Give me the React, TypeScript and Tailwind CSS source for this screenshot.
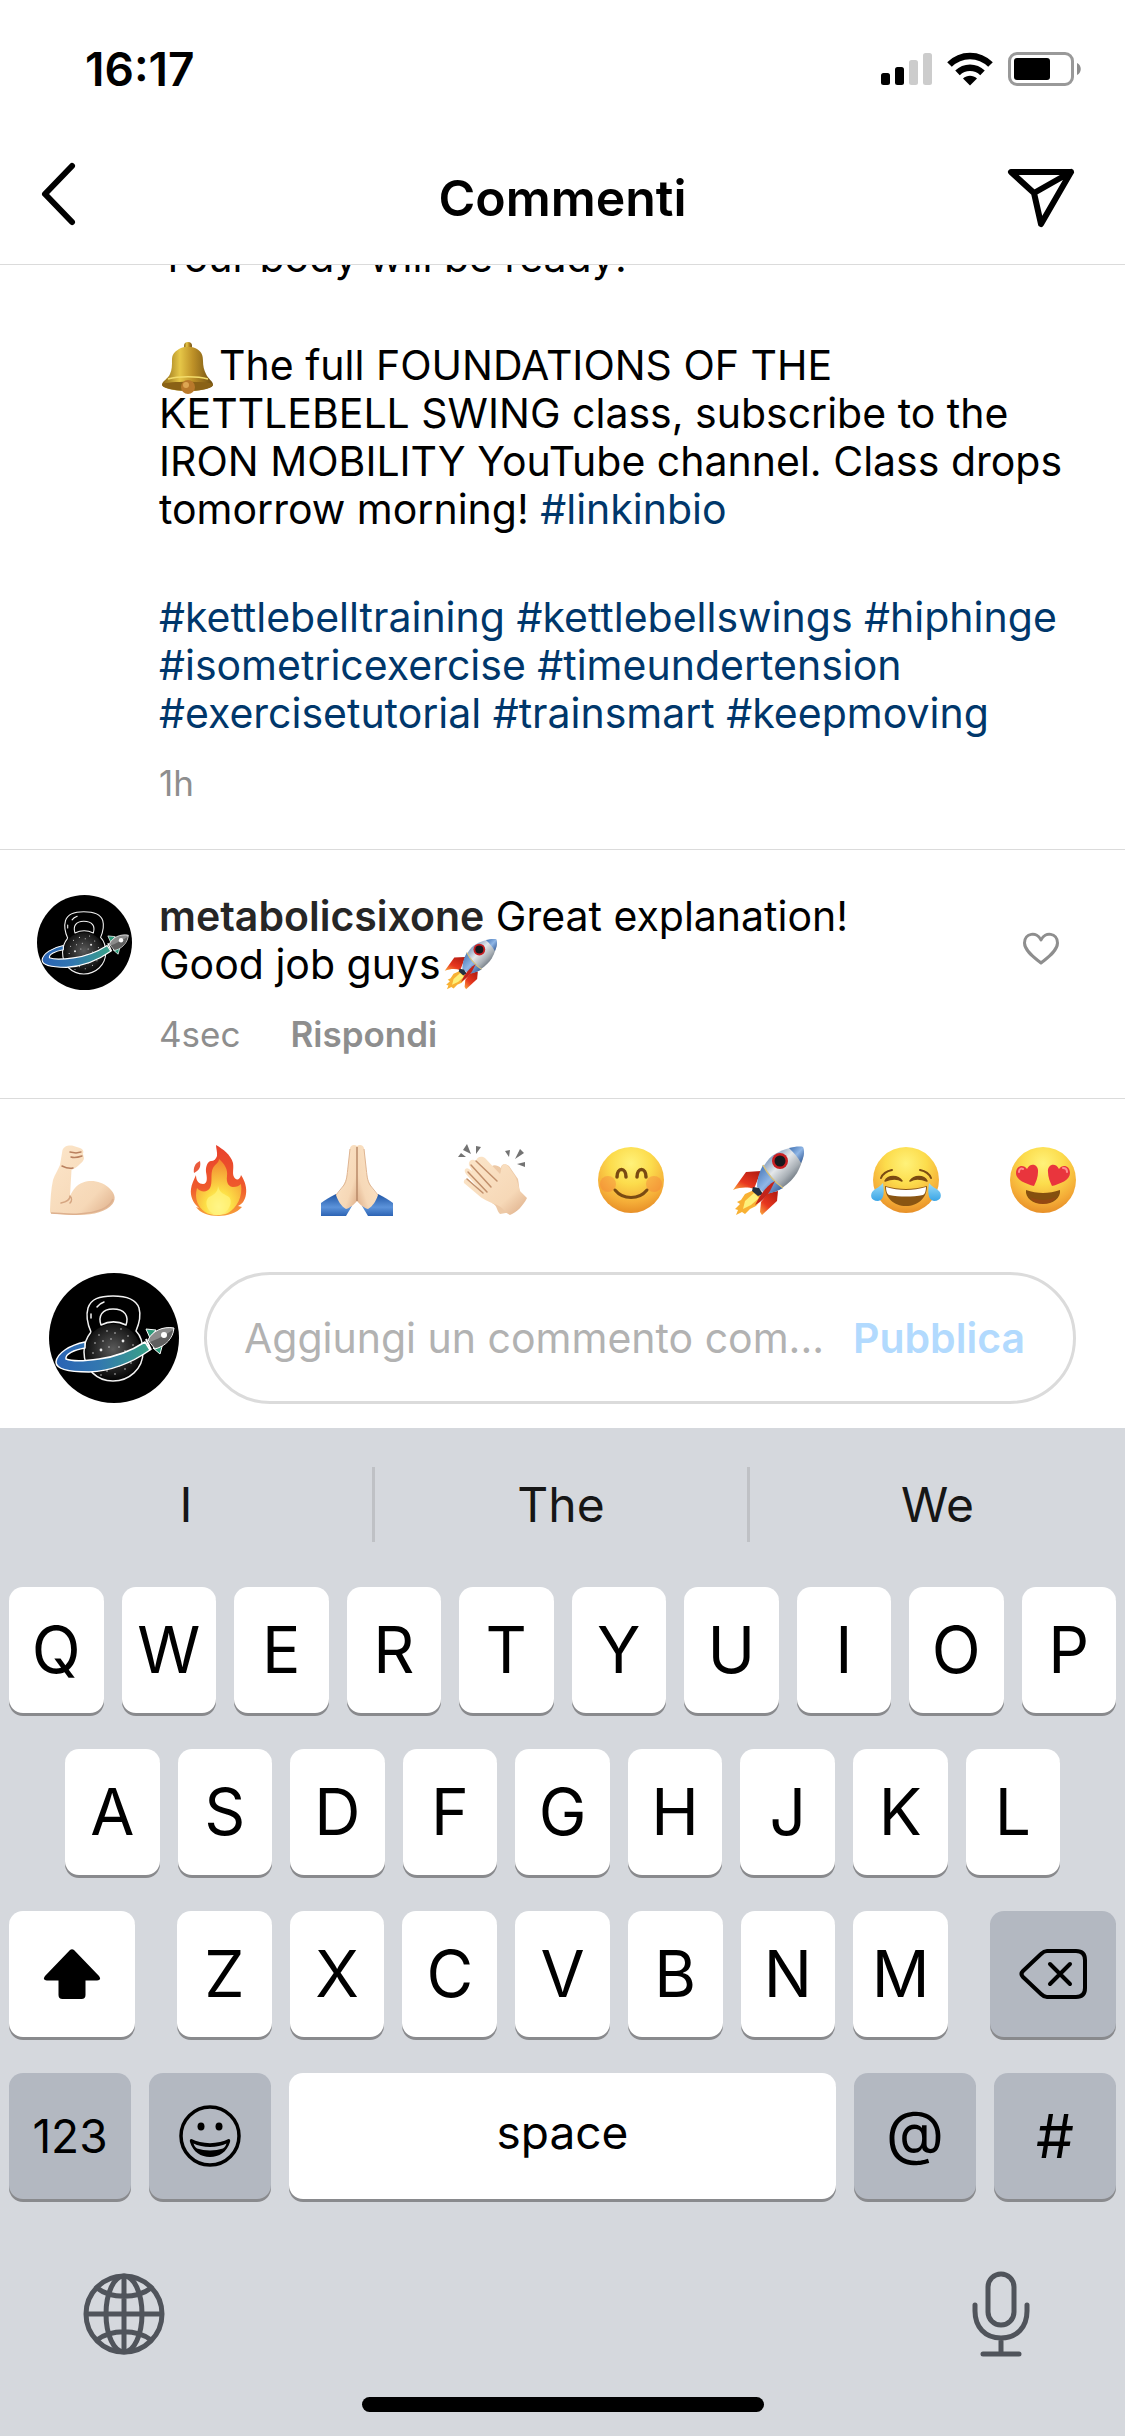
import type { ReactNode } from "react";

/* Shared gradient definitions used by the emoji and the avatar. */
function Gradients() {
  return (
    <svg width="0" height="0" className="absolute" aria-hidden="true">
      <defs>
        <radialGradient id="face" cx="0.5" cy="0.25" r="0.78">
          <stop offset="0" stopColor="#fff27a" />
          <stop offset="0.4" stopColor="#fcdc4c" />
          <stop offset="0.75" stopColor="#f5ae38" />
          <stop offset="1" stopColor="#e58a25" />
        </radialGradient>
        <linearGradient id="skin" x1="0" y1="0" x2="1" y2="1">
          <stop offset="0" stopColor="#fce6ca" />
          <stop offset="0.7" stopColor="#f6d8b7" />
          <stop offset="1" stopColor="#dcab86" />
        </linearGradient>
        <linearGradient id="flame" x1="0" y1="0" x2="0" y2="1">
          <stop offset="0" stopColor="#e8402c" />
          <stop offset="0.6" stopColor="#ef5a2c" />
          <stop offset="1" stopColor="#f7a03a" />
        </linearGradient>
        <radialGradient id="core" cx="0.5" cy="0.85" r="0.8">
          <stop offset="0" stopColor="#fffbb0" />
          <stop offset="0.35" stopColor="#fde047" />
          <stop offset="1" stopColor="#f38b30" />
        </radialGradient>
        <linearGradient id="sleeve" x1="0" y1="0" x2="0" y2="1">
          <stop offset="0" stopColor="#1f55a5" />
          <stop offset="0.6" stopColor="#5c93da" />
          <stop offset="1" stopColor="#2c63b4" />
        </linearGradient>
        <linearGradient id="hull" x1="0.2" y1="0.2" x2="0.8" y2="0.8">
          <stop offset="0" stopColor="#6f8fb8" />
          <stop offset="0.4" stopColor="#e4e7ea" />
          <stop offset="0.7" stopColor="#a9b0b6" />
          <stop offset="1" stopColor="#56606b" />
        </linearGradient>
        <linearGradient id="steel" x1="0" y1="0" x2="1" y2="1">
          <stop offset="0" stopColor="#3d6eb0" />
          <stop offset="0.5" stopColor="#8fb6e6" />
          <stop offset="1" stopColor="#284f8c" />
        </linearGradient>
        <linearGradient id="fin" x1="0.8" y1="0" x2="0.1" y2="1">
          <stop offset="0" stopColor="#b51d12" />
          <stop offset="0.6" stopColor="#e8371f" />
          <stop offset="1" stopColor="#f9a13c" />
        </linearGradient>
        <linearGradient id="gold" x1="0" y1="0" x2="1" y2="0">
          <stop offset="0" stopColor="#8a6414" />
          <stop offset="0.35" stopColor="#e6c748" />
          <stop offset="0.6" stopColor="#bf9228" />
          <stop offset="1" stopColor="#6e4d10" />
        </linearGradient>
        <linearGradient id="tear" x1="0" y1="0" x2="0" y2="1">
          <stop offset="0" stopColor="#9adcf8" />
          <stop offset="1" stopColor="#3aa5e6" />
        </linearGradient>
        <linearGradient id="orbit" x1="0" y1="0" x2="1" y2="0">
          <stop offset="0" stopColor="#2a63b5" />
          <stop offset="0.45" stopColor="#3277b0" />
          <stop offset="1" stopColor="#3aa287" />
        </linearGradient>
        <radialGradient id="ball" cx="0.5" cy="0.45" r="0.55">
          <stop offset="0" stopColor="#5a5a5a" />
          <stop offset="1" stopColor="#050505" />
        </radialGradient>
      </defs>
    </svg>
  );
}

function Muscle() {
  return (
    <>
      <path d="M16.500 6C18 2 22 1 26 1.500L34 4C37 5 38 7 37 10L38 14C38 17 35 19 33 21C30 24 27 25 25.500 26L24 52C27 46 30 41 37 38.500C46 35 56 38 62 43C68 48 71 54 66.500 60C60 68 48 70.500 34 71C24 71.500 14 70 5.500 69.500C4 69.500 4 68 4 66C4.500 55 5 45 7 36C9 30 12 26 14 21Z" fill="url(#skin)" />
      <path d="M24 52C24 56 20 58 15 59M24 52C26 54 26 57 24 59" fill="none" stroke="#d5a581" strokeWidth="1.500" strokeLinecap="round" />
      <path d="M24 8L30 9L35 8M25 13C28 14 33 13 36 12M16 22C20 24 23 25 27 24" fill="none" stroke="#b9805f" strokeWidth="1.500" strokeLinecap="round" />
      <path d="M67 55C63 66 48 69 33 70C22 71 13 69 5 69" fill="none" stroke="#ddb08e" strokeWidth="1.500" />
    </>
  );
}

function Fire() {
  return (
    <>
      <path d="M33 1C40 5 48 11 50 19C51 25 49 29 51 33C53 37 57 36 58 31C62 37 64 44 63 50C62 57 59 60 55 62L59 63C54 69 44 72 35 72C26 72 17 69 13 63L16 64C10 59 7 52 8 45C8.500 40 11 36 13 31C13 37 16 40 20 40C25 40 24 33 23 28C22.500 22 25 17 28 17C31 17 33 15 34 12C34.500 8 33 4 33 1Z" fill="url(#flame)" />
      <path d="M17 17C18 22 17 26 11 29C10 24 12 19 17 17Z" fill="#ea5a3c" />
      <path d="M36 15C42 20 45 26 44 32C43 39 46 43 50 43C54 43 56 42 58 40C60 52 54 64 45 69C38 72 28 72 22 68C15 63 11 55 14 44C17 48 24 49 27 44C30 38 27 30 30 24C32 20 36 19 36 15Z" fill="url(#core)" />
      <path d="M35 42C37 50 42 50 46 53C51 58 45 70 35 71C25 70 20 58 26 53C31 51 35 48 35 42Z" fill="#fff37a" opacity="0.75" />
    </>
  );
}

function Pray() {
  const half = (
    <>
      <path d="M15 50C9 53 4 56 0 59V72H25L31 62Z" fill="url(#sleeve)" />
      <path d="M36 2C33 0 30 1 29 4L27 23C26 30 26 35 23 40C21 45 18 48 15 51C17 57 20 62 25 65C30 64 34 59 36 57Z" fill="url(#skin)" />
      <path d="M29 5L27 23C26 31 26 36 23 41L15 51" fill="none" stroke="#dfb592" strokeWidth="1" />
    </>
  );
  return (
    <>
      {half}
      <g transform="translate(72 0) scale(-1 1)">{half}</g>
      <path d="M36 3V57" stroke="#b98a68" strokeWidth="1.500" />
    </>
  );
}

function Clap() {
  return (
    <>
      <path d="M9 0L13 10L5 6ZM18 2L23 3L18 10ZM0 13L3 9L8 13ZM52 6L47 7L51 13ZM62 5L66 9L57 15ZM59 20L67 18V23Z" fill="#737373" />
      <path d="M30 26C34 20 38 20 43 24C43 20 47 19 51 22L60 35C61 40 61 44 62 48L54 68L42 70C38 66 40 62 34 59Z" fill="#edc9a6" />
      <path d="M6 39C5 36 8 34 10 35L22 46L8 30C5 26 8 23 11 25L14 27L11 21C10 17 14 14 18 17C19 12 24 12 27 14L42 30C44 27 42 22 46 20C50 20 52 25 55 29C59 34 60 41 62 47L69 54C65 62 59 68 52 71C47 69 45 63 39 61C31 58 24 55 19 50Z" fill="url(#skin)" />
      <path d="M18 17L39 37M13 21L33 43M10 28L29 48M9 35L25 49" fill="none" stroke="#c2906c" strokeWidth="1.500" strokeLinecap="round" />
    </>
  );
}

function Face({ children }: { children: ReactNode }) {
  return (
    <>
      <circle cx="36" cy="36" r="33" fill="url(#face)" />
      {children}
    </>
  );
}

function Smile() {
  return (
    <Face>
      <circle cx="13" cy="40" r="8" fill="#f4743b" opacity="0.35" />
      <circle cx="59" cy="40" r="8" fill="#f4743b" opacity="0.35" />
      <path d="M22 33C22 23 31 23 31 33M42 33C42 23 51 23 51 33" fill="none" stroke="#7a4a12" strokeWidth="3.500" strokeLinecap="round" />
      <path d="M20 46C28 56 44 56 52 46" fill="none" stroke="#7a4a12" strokeWidth="3" strokeLinecap="round" />
    </Face>
  );
}

function Joy() {
  return (
    <Face>
      <path d="M15 42C29 46 43 46 57 42C57 54 48 62 36 62C24 62 15 54 15 42Z" fill="#8a5512" />
      <path d="M16 43C29 47 43 47 56 43C56 47 55 50 53 51C42 53 30 53 19 51C17 50 16 47 16 43Z" fill="#fff" />
      <path d="M15 37C18 31 28 31 32 37C27 34 20 35 15 37ZM40 37C44 31 54 31 57 37C52 35 45 34 40 37Z" fill="#7a4a12" stroke="#7a4a12" strokeWidth="1.500" strokeLinejoin="round" />
      <path d="M11 34C13 29 17 27 22 26M61 34C59 29 55 27 50 26" fill="none" stroke="#7a4a12" strokeWidth="2" strokeLinecap="round" />
      <path d="M13 39C14 46 15 56 8 57C0 57 0 50 3 47C6 44 10 43 13 39ZM59 39C58 46 57 56 64 57C72 57 72 50 69 47C66 44 62 43 59 39Z" fill="url(#tear)" />
    </Face>
  );
}

function HeartEyes() {
  return (
    <Face>
      <path d="M19 46C30 50 42 50 53 46C54 54 46 60 36 60C26 60 18 54 19 46Z" fill="#85500f" />
      <path d="M23 53C31 57 41 57 49 53C46 58 42 60 36 60C30 60 26 58 23 53Z" fill="#b53a1a" opacity="0.35" />
      <path d="M27 42C19 40 9 36 9 29C9 21 17 20 20 25C23 18 32 20 31 28C31 33 29 38 27 42Z" fill="#e9353d" />
      <path d="M45 42C53 40 63 36 63 29C63 21 55 20 52 25C49 18 40 20 41 28C41 33 43 38 45 42Z" fill="#e9353d" />
      <path d="M12 28C12 25 14 24 16 25M56 24C59 24 60 26 60 28" fill="none" stroke="#ff8f8f" strokeWidth="2" strokeLinecap="round" />
    </Face>
  );
}

function Rocket() {
  return (
    <>
      <path d="M29 27L14 28L1 46C9 43 16 43 22 45Z" fill="url(#fin)" />
      <path d="M46 47L45 57L30 71L28 68L29 58L36 49Z" fill="url(#fin)" />
      <path d="M22 46L13 50L9 56L5 58L8 60L3 65L6 66L4 71L10 68L13 70L18 65L24 62L31 54Z" fill="#f8b133" />
      <path d="M22 49L13 57L11 65L19 61L27 54Z" fill="#fdf07a" />
      <path d="M71 3C63 2 50 5 40 12C33 18 26 30 25 43L34 50C46 48 58 40 65 29C70 20 73 10 71 3Z" fill="url(#hull)" />
      <path d="M31 21C27 28 25 36 25 43L34 50C40 49 46 47 51 44C44 38 36 31 31 21Z" fill="url(#steel)" />
      <path d="M71 3C67 2 62 3 57 4C61 8 66 13 69 19C72 13 73 8 71 3Z" fill="url(#steel)" />
      <path d="M31 21C36 31 44 39 51 44" fill="none" stroke="#d9c27a" strokeWidth="1.500" />
      <circle cx="48" cy="17" r="8" fill="#c81e22" />
      <circle cx="48" cy="17" r="5.500" fill="#16181d" />
      <path d="M21 43L27 44L31 50L26 52L20 47Z" fill="#23303f" />
      <path d="M43 37C37 40 32 46 28 52L23 61C30 57 35 52 38 47Z" fill="#c3241a" />
    </>
  );
}

function Bell() {
  return (
    <>
      <circle cx="29" cy="5" r="4" fill="url(#gold)" />
      <path d="M20 8C25 5 33 5 38 8C43 11 44 15 44 20C44 25 45 29 47 33C49 38 54 40 54 44C54 47 42 50 29 50C16 50 3 47 3 44C3 40 9 38 11 33C13 29 13 24 13 19C13 14 15 11 20 8Z" fill="url(#gold)" />
      <path d="M3 43C10 40 48 40 54 43C54 47 42 50 29 50C16 50 3 47 3 43Z" fill="#8a6216" />
      <path d="M9 38C20 35 38 35 49 38" fill="none" stroke="#f3dc6b" strokeWidth="1.500" />
      <circle cx="29" cy="46" r="7" fill="#b9792b" />
      <circle cx="27" cy="44" r="3" fill="#dda653" />
    </>
  );
}

function Emoji({ children, className, size = 72 }: { children: ReactNode; className: string; size?: number }) {
  return (
    <svg viewBox={`0 0 ${size} ${size}`} className={className} aria-hidden="true">
      {children}
    </svg>
  );
}

const stars = [
  [50, 62, 1], [58, 58, 1], [66, 60, 1], [74, 68, 2], [79, 63, 1], [54, 68, 1], [62, 66, 1], [60, 74, 1],
  [52, 77, 2], [46, 70, 1], [70, 74, 1], [84, 72, 1], [44, 80, 1], [68, 82, 1], [76, 78, 1], [72, 56, 1],
  [58, 98, 1], [66, 101, 1], [76, 96, 1], [70, 93, 1], [82, 90, 1], [52, 102, 1],
];

function Avatar({ className }: { className: string }) {
  return (
    <svg viewBox="0 0 130 130" className={className} role="img" aria-label="metabolicsixone">
      <circle cx="65" cy="65" r="65" fill="#000" />
      <circle cx="64" cy="79" r="28" fill="url(#ball)" />
      {stars.map(([x, y, r]) => (
        <circle key={`${x}-${y}`} cx={x} cy={y} r={r * 0.7} fill="#e8e8e8" />
      ))}
      <g fill="none" stroke="#f2f2f2" strokeWidth="1.500" strokeLinejoin="round">
        <path d="M42 59C38 50 37 42 39 35C42 26 50 23 64 23C78 23 87 26 90 35C92 42 90 51 87 58C92 63 94 71 94 79C94 96 80 108 64 108C48 108 35 96 35 79C35 71 38 64 42 59" />
        <path d="M52 52C49 43 53 36 64 36C76 36 80 43 77 52C69 48 60 48 52 52Z" />
        <path d="M48 34C50 31 52 30 55 29M42 45V41" strokeLinecap="round" />
      </g>
      <path d="M96 69C82 78 66 84 50 86C36 88 22 88 17 86C16 81 25 77 36 75V69C21 72 8 80 7 89C7 97 22 99 40 99C62 98 84 89 101 77Z" fill="url(#orbit)" stroke="#fff" strokeWidth="1.500" strokeLinejoin="round" />
      <path d="M97 56L107 57L101 65ZM114 70L111 81L104 75Z" fill="#2f9c7c" stroke="#fff" strokeWidth="1" strokeLinejoin="round" />
      <path d="M99 67C103 58 114 53 125 55C124 65 117 73 106 76Z" fill="#8b8b8b" stroke="#fff" strokeWidth="1" />
      <path d="M101 69C107 67 118 61 124 57C123 66 116 73 106 75Z" fill="#5f5f5f" />
      <path d="M97 66L102 77" stroke="#fff" strokeWidth="2" />
      <circle cx="115" cy="62" r="3" fill="#fff" />
    </svg>
  );
}

function StatusBar() {
  return (
    <div className="flex h-[138px] items-center justify-between pr-[43px] pl-[85px]">
      <span className="text-[46px] leading-none font-semibold">16:17</span>
      <div className="flex items-center gap-[15px]">
        <svg viewBox="0 0 51 34" className="h-[34px] w-[51px]" aria-label="Segnale">
          <rect x="0" y="21" width="9" height="12" rx="2.500" />
          <rect x="14" y="15" width="9" height="18" rx="2.500" />
          <rect x="28" y="8" width="9" height="25" rx="2.500" fill="#cccccc" />
          <rect x="42" y="1" width="9" height="32" rx="2.500" fill="#cccccc" />
        </svg>
        <svg viewBox="0 0 46 34" className="h-[34px] w-[46px]" aria-label="Wi-Fi">
          <g fill="none" stroke="#000" strokeWidth="6.500">
            <path d="M2.500 12.500C14 1 32 1 43.500 12.500" />
            <path d="M10.500 20.800C17.500 14 28.500 14 35.500 20.800" />
          </g>
          <path d="M16 26.500C20 22.700 26 22.700 30 26.500L23 33.500Z" />
        </svg>
        <svg viewBox="0 0 74 34" className="h-[34px] w-[74px]" aria-label="Batteria">
          <rect x="1.500" y="1.500" width="63" height="31" rx="7.500" fill="none" stroke="#999999" strokeWidth="3" />
          <rect x="6" y="6" width="36" height="22" rx="3" />
          <path d="M69 11C74 13 74 21 69 23Z" fill="#8c8c8c" />
        </svg>
      </div>
    </div>
  );
}

function Header() {
  return (
    <header className="flex h-[127px] items-center justify-between border-b border-[#dbdbdb] px-[39px] pb-[14px]">
      <button type="button" aria-label="Indietro" className="w-[72px]">
        <svg viewBox="0 0 40 66" className="h-[66px] w-[40px]">
          <path d="M33 5L6 33L33 61" fill="none" stroke="#000" strokeWidth="6" strokeLinecap="round" strokeLinejoin="round" />
        </svg>
      </button>
      <h1 className="pt-[8px] text-[50px] leading-[60px] font-semibold">Commenti</h1>
      <button type="button" aria-label="Invia" className="flex w-[72px] justify-end pt-[8px]">
        <svg viewBox="0 0 66 60" className="mr-[12px] h-[60px] w-[66px] shrink-0 overflow-visible">
          <path d="M3 4H63L33 56L26 25ZM26 25L63 4" fill="none" stroke="#000" strokeWidth="6" strokeLinejoin="round" strokeLinecap="round" />
        </svg>
      </button>
    </header>
  );
}

function Tag({ name }: { name: string }) {
  return (
    <a href={`#${name}`} className="text-[#00376b]">
      #{name}
    </a>
  );
}

function Caption() {
  return (
    <article className="overflow-hidden border-b border-[#dbdbdb] pr-[40px] pb-[44px] pl-[159px] text-[41px] leading-[48px]">
      <p className="-mt-[32px]">Your body will be ready!</p>
      <p className="mt-[60px] whitespace-nowrap">
        <Emoji size={56} className="-my-[12px] mr-[4px] inline-block size-[56px] align-middle">
          <Bell />
        </Emoji>
        The full FOUNDATIONS OF THE
        <br />
        KETTLEBELL SWING class, subscribe to the
        <br />
        IRON MOBILITY YouTube channel. Class drops
        <br />
        tomorrow morning! <Tag name="linkinbio" />
      </p>
      <p className="mt-[60px] whitespace-nowrap">
        <Tag name="kettlebelltraining" /> <Tag name="kettlebellswings" /> <Tag name="hiphinge" />
        <br />
        <Tag name="isometricexercise" /> <Tag name="timeundertension" />
        <br />
        <Tag name="exercisetutorial" /> <Tag name="trainsmart" /> <Tag name="keepmoving" />
      </p>
      <p className="mt-[24px] text-[35px] leading-[44px] text-[#8e8e8e]">1h</p>
    </article>
  );
}

function Comment() {
  return (
    <article className="flex items-start border-b border-[#dbdbdb] pt-[42px] pr-[65px] pb-[42px] pl-[37px]">
      <Avatar className="mt-[3px] mr-[27px] size-[95px] shrink-0" />
      <div className="flex-1 text-[41px] leading-[48px] whitespace-nowrap">
        <p>
          <a href="#metabolicsixone" className="font-semibold text-[#262626]">
            metabolicsixone
          </a>{" "}
          Great explanation!
          <br />
          Good job guys
          <Emoji className="-mt-[12px] -mb-[4px] ml-[3px] inline-block size-[53px] align-middle">
            <Rocket />
          </Emoji>
        </p>
        <div className="mt-[24px] flex gap-[50px] text-[35px] leading-[44px] text-[#8e8e8e]">
          <span>4sec</span>
          <button type="button" className="font-semibold">
            Rispondi
          </button>
        </div>
      </div>
      <button type="button" aria-label="Mi piace" className="mt-[40px]">
        <svg viewBox="0 0 38 34" className="h-[34px] w-[38px]">
          <path d="M19 31C13 26 2.500 19 2.500 11C2.500 1 15 -1 19 8C23 -1 35.500 1 35.500 11C35.500 19 25 26 19 31Z" fill="none" stroke="#8e8e8e" strokeWidth="3" strokeLinejoin="round" />
        </svg>
      </button>
    </article>
  );
}

const quickEmoji: { name: string; drawing: ReactNode }[] = [
  { name: "Bicipite", drawing: <Muscle /> },
  { name: "Fuoco", drawing: <Fire /> },
  { name: "Mani giunte", drawing: <Pray /> },
  { name: "Applauso", drawing: <Clap /> },
  { name: "Sorriso", drawing: <Smile /> },
  { name: "Razzo", drawing: <Rocket /> },
  { name: "Lacrime di gioia", drawing: <Joy /> },
  { name: "Occhi a cuore", drawing: <HeartEyes /> },
];

function Composer() {
  return (
    <section className="px-[46px] pt-[45px] pb-[24px]">
      <div className="flex justify-between">
        {quickEmoji.map(({ name, drawing }) => (
          <button key={name} type="button" aria-label={name}>
            <Emoji className="size-[72px]">{drawing}</Emoji>
          </button>
        ))}
      </div>
      <form className="mt-[56px] flex items-center gap-[25px] px-[3px]">
        <Avatar className="size-[130px] shrink-0" />
        <div className="flex h-[132px] min-w-0 flex-1 items-center rounded-full border-3 border-[#dbdbdb] pr-[48px] pl-[37px]">
          <input
            type="text"
            aria-label="Commento"
            placeholder="Aggiungi un commento com..."
            className="min-w-0 flex-1 text-[41px] leading-[48px] outline-none placeholder:text-[#b2b2b2]"
          />
          <button type="button" className="shrink-0 text-[41px] leading-[48px] font-semibold text-[#b2dafe]">
            Pubblica
          </button>
        </div>
      </form>
    </section>
  );
}

function Key({ children, label, className }: { children: ReactNode; label?: string; className: string }) {
  return (
    <button
      type="button"
      aria-label={label}
      className={`flex h-[126px] items-center justify-center rounded-[14px] text-[64px] leading-none shadow-[0_3px_0_#898a8d] ${className}`}
    >
      {children}
    </button>
  );
}

function Letters({ letters }: { letters: string }) {
  return (
    <>
      {letters.split("").map((letter) => (
        <Key key={letter} className="min-w-0 flex-1 bg-white">
          {letter}
        </Key>
      ))}
    </>
  );
}

function Keyboard() {
  return (
    <section className="flex-1 bg-[#d5d8dd] pt-[39px]">
      <div className="grid grid-cols-3 divide-x-3 divide-[#bfc1c5]">
        {["I", "The", "We"].map((word) => (
          <button key={word} type="button" className="h-[75px] text-[48px] leading-none text-[#161616]">
            {word}
          </button>
        ))}
      </div>
      <div className="mt-[45px] flex flex-col gap-[36px]">
        <div className="flex gap-[18px] px-[9px]">
          <Letters letters="QWERTYUIOP" />
        </div>
        <div className="flex gap-[18px] px-[65px]">
          <Letters letters="ASDFGHJKL" />
        </div>
        <div className="flex gap-[42px] px-[9px]">
          <Key label="Maiuscole" className="w-[126px] bg-white">
            <svg viewBox="0 0 58 50" className="h-[50px] w-[58px]">
              <path d="M27 1Q29 -0.500 31 1L56 27Q59 31 54 31.500H42.500V46Q42.500 50 38.500 50H19.500Q15.500 50 15.500 46V31.500H4Q-1 31 2 27Z" />
            </svg>
          </Key>
          <div className="flex flex-1 gap-[18px]">
            <Letters letters="ZXCVBNM" />
          </div>
          <Key label="Cancella" className="w-[126px] bg-[#b3b8c1]">
            <svg viewBox="0 0 70 52" className="h-[52px] w-[70px]" fill="none" stroke="#000" strokeWidth="4" strokeLinecap="round" strokeLinejoin="round">
              <path d="M29 3H58Q67 3 67 12V40Q67 49 58 49H29Q26 49 23 46L5 29Q2 26 5 23L23 6Q26 3 29 3Z" />
              <path d="M32 16L52 36M52 16L32 36" />
            </svg>
          </Key>
        </div>
        <div className="flex gap-[18px] px-[9px]">
          <Key className="w-[122px] bg-[#b3b8c1]">
            <span className="text-[46px]">123</span>
          </Key>
          <Key label="Emoji" className="w-[122px] bg-[#b3b8c1]">
            <svg viewBox="0 0 62 62" className="size-[62px]">
              <circle cx="31" cy="31" r="29" fill="none" stroke="#000" strokeWidth="3.500" />
              <ellipse cx="22" cy="21.500" rx="3.500" ry="4" />
              <ellipse cx="40" cy="21.500" rx="3.500" ry="4" />
              <path d="M12.500 34C22 39.500 40 39.500 49.500 34C51 34 51.500 35 51 37C48 47 40 52 31 52C22 52 14 47 11 37C10.500 35 11 34 12.500 34Z" />
              <path d="M14.500 38.500C23 43 39 43 47.500 38.500C46.500 41 46 42 44 43.500C36 46 26 46 18 43.500C16 42 15.500 41 14.500 38.500Z" fill="#b3b8c1" />
            </svg>
          </Key>
          <Key className="flex-1 bg-white pb-[8px]">
            <span className="text-[46px]">space</span>
          </Key>
          <Key className="w-[122px] bg-[#b3b8c1] pb-[8px]">
            <span className="text-[60px]">@</span>
          </Key>
          <Key className="w-[122px] bg-[#b3b8c1]">
            <span className="text-[60px]">#</span>
          </Key>
        </div>
      </div>
      <div className="mt-[72px] flex items-center justify-between pr-[94px] pl-[83px]">
        <button type="button" aria-label="Cambia tastiera">
          <svg viewBox="0 0 82 82" className="size-[82px]" fill="none" stroke="#50545b" strokeWidth="5">
            <circle cx="41" cy="41" r="38" />
            <ellipse cx="41" cy="41" rx="18" ry="38" />
            <path d="M41 3V79M3 41H79M14 15C28 26 54 26 68 15M14 67C28 56 54 56 68 67" />
          </svg>
        </button>
        <button type="button" aria-label="Dettatura">
          <svg viewBox="0 0 60 86" className="h-[86px] w-[60px]" fill="none" stroke="#50545b" strokeWidth="5" strokeLinecap="round">
            <rect x="17" y="3" width="26" height="51" rx="13" />
            <path d="M4 34V40C4 56 14 67 30 67C46 67 56 56 56 40V34M30 67V82M12 83H48" />
          </svg>
        </button>
      </div>
      <div className="mx-auto mt-[40px] h-[15px] w-[402px] rounded-full bg-black" />
    </section>
  );
}

export default function App() {
  return (
    <main className="flex min-h-screen flex-col bg-white font-[Inter,'Liberation_Sans',sans-serif] text-black">
      <Gradients />
      <StatusBar />
      <Header />
      <Caption />
      <Comment />
      <Composer />
      <Keyboard />
    </main>
  );
}
